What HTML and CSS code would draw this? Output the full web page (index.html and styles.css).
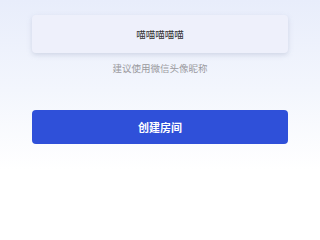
FILE: index.html
```html
<!DOCTYPE html>
<html lang="zh">
<head>
<meta charset="utf-8">
<link rel="stylesheet" href="styles.css">
</head>
<body>
<main class="page">
  <div class="name-card">喵喵喵喵喵</div>
  <p class="hint">建议使用微信头像昵称</p>
  <button class="create-btn">创建房间</button>
</main>
</body>
</html>
```
FILE: styles.css
```css
html, body {
  margin: 0;
  padding: 0;
  width: 320px;
  height: 240px;
  overflow: hidden;
}
body {
  background: linear-gradient(180deg, #e8edfb 0px, #f3f6fd 90px, #ffffff 170px, #ffffff 240px);
  font-family: "Noto Sans CJK SC", "Noto Sans", sans-serif;
}
.page {
  display: flex;
  flex-direction: column;
  align-items: center;
  padding-top: 15px;
}
.name-card {
  width: 256px;
  height: 38px;
  box-sizing: border-box;
  border-radius: 4px;
  background: #eef0fb;
  box-shadow: 0 2px 5px rgba(150, 160, 190, 0.35);
  display: flex;
  align-items: center;
  justify-content: center;
  font-size: 9.5px;
  color: #333;
}
.hint {
  margin: 8px 0 0;
  font-size: 9.5px;
  line-height: 14px;
  color: #9a9a9e;
}
.create-btn {
  margin-top: 35px;
  width: 256px;
  height: 34px;
  border: none;
  border-radius: 4px;
  background: #2f50d9;
  color: #fff;
  font-family: inherit;
  font-size: 11px;
  font-weight: 700;
  padding: 0;
}
```
